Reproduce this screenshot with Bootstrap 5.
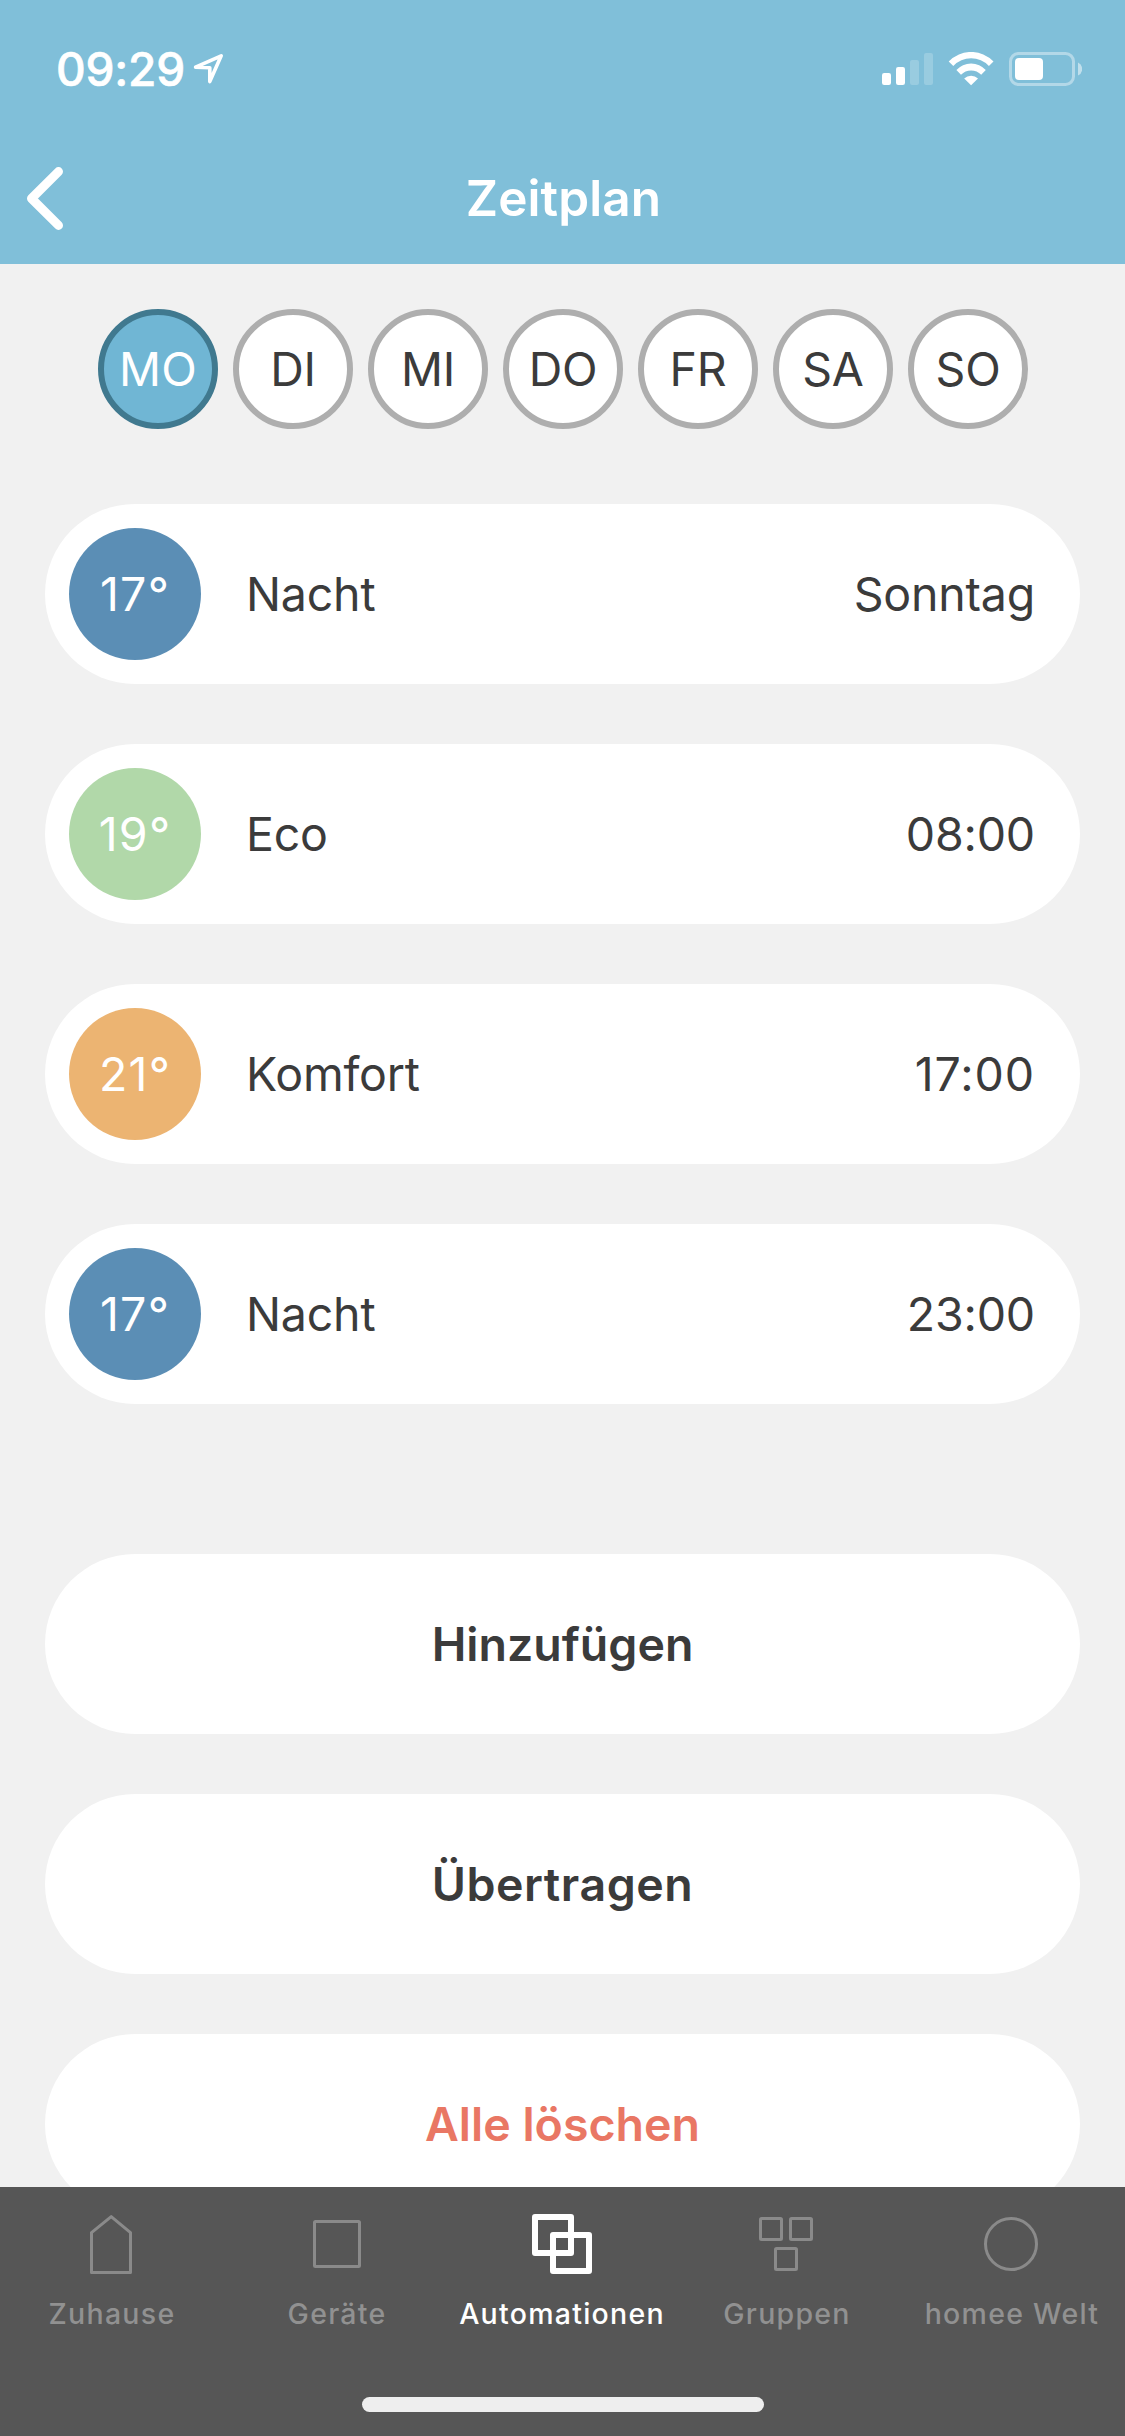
<!DOCTYPE html>
<html lang="de">
<head>
<meta charset="utf-8">
<meta name="viewport" content="width=device-width, initial-scale=1">
<title>Zeitplan</title>
<link href="https://cdn.jsdelivr.net/npm/bootstrap@5.3.0/dist/css/bootstrap.min.css" rel="stylesheet">
<style>
body{font-family:Inter,"Liberation Sans",sans-serif;font-size:46.5px;line-height:1.2;color:#3b3b3b;background:#f1f1f1;letter-spacing:-.2px}
.screen{height:2436px}
.app-head{background:#80bfd9;height:264px}
.status-row{height:132px;padding:6px 43px 0 56px}
.clock{font-size:46px;font-weight:500;letter-spacing:-.2px;padding-top:1px;-webkit-text-stroke:.6px #fff}
.title-row{height:132px}
.title-row h1{font-size:49.5px;font-weight:600;letter-spacing:.12px;padding:2px 0 0 2px}
.back-btn{width:90px;line-height:0}
.content-area{min-height:0}
.days{gap:15px;padding-top:45px;padding-bottom:75px;padding-left:1px}
.day{width:120px;height:120px;padding-top:2px;border:6px solid #aeaeae;background:#fff;letter-spacing:-.3px}
.day.active{background:#70b6d4;border-color:#40798f;color:#fff;letter-spacing:.3px}
.stack{gap:60px;padding:0 45px}
.pill{height:180px;flex:none;background:#fff;border-radius:90px}
.entry{padding:0 45px 0 24px}
.entry-text{padding-top:2px}
.starts-one{letter-spacing:.9px}
.temp{width:132px;height:132px;padding-top:2px;color:#fff;margin-right:45px;letter-spacing:1.25px}
.t-night{background:#5b8eb5}
.t-eco{background:#b1d8a9}
.t-comfort{background:#ecb472}
.actions{margin-top:150px}
.act{font-weight:600;font-size:46.5px;letter-spacing:0;color:#3b3b3b;border:0;padding:1px 0 0}
.act.wide{letter-spacing:.55px}
.danger-text{color:#e97764}
.tabs-bottom{height:249px;background:#565656;z-index:1}
.tab-item{width:225px;padding-top:27px;color:#919191;font-size:28.5px;font-weight:500;letter-spacing:1.26px;white-space:nowrap}
.tab-item svg{color:#8a8a8a;margin-bottom:23px}
.tab-label{margin-right:1px}
.tab-item.active,.tab-item.active svg{color:#fff}
.tabs-row{height:210px}
.home-bar{width:402px;height:15px;background:#eee;margin-right:-1px}
</style>
</head>
<body>
<div class="screen d-flex flex-column overflow-hidden">
  <header class="app-head text-white flex-shrink-0">
    <div class="status-row d-flex justify-content-between align-items-center">
      <div class="d-flex align-items-center">
        <span class="clock">09:29</span>
        <svg class="ms-2" width="32" height="34" viewBox="194 52 32 34" fill="none" stroke="#fff" stroke-width="3.6" stroke-linejoin="round"><path d="M196.6 67.2 222.2 55.8 210.8 81.6V67.7Z"/></svg>
      </div>
      <svg width="202" height="34" viewBox="880 52 202 34" fill="#fff">
        <rect x="882" y="73" width="9" height="12" rx="2.2"/><rect x="896" y="67" width="9" height="18" rx="2.2"/>
        <g opacity=".2"><rect x="910" y="60" width="9" height="25" rx="2.2"/><rect x="924" y="53" width="9" height="32" rx="2.2"/></g>
        <path d="M948.7 61.5A31 31 0 0 1 993.5 61.5L988.9 66A24.5 24.5 0 0 0 953.3 66Z"/>
        <path d="M956.4 70A19.7 19.7 0 0 1 985.8 70L981.2 74.7A14 14 0 0 0 961 74.7Z"/>
        <path d="M964.2 78.6A10 10 0 0 1 978 78.6L971.1 85.3Z"/>
        <rect x="1010.5" y="53.5" width="63" height="31" rx="8" fill="none" stroke="#fff" stroke-width="3" opacity=".4"/>
        <rect x="1015" y="58" width="28" height="22" rx="4"/>
        <path d="M1078 62.6A7 7 0 0 1 1078 75.4Z" opacity=".5"/>
      </svg>
    </div>
    <div class="title-row d-flex align-items-center">
      <a class="back-btn" href="#" aria-label="Zurück"><svg width="66" height="66" viewBox="0 165 66 66" fill="none" stroke="#fff" stroke-width="9" stroke-linecap="round" stroke-linejoin="round"><path d="M58.5 171.6 31.5 198.5 58.5 225.4"/></svg></a>
      <h1 class="flex-fill text-center m-0">Zeitplan</h1>
      <span class="back-btn"></span>
    </div>
  </header>

  <main class="content-area flex-fill overflow-hidden">
    <div class="days d-flex justify-content-center">
      <div class="day active rounded-circle d-flex align-items-center justify-content-center">MO</div>
      <div class="day rounded-circle d-flex align-items-center justify-content-center">DI</div>
      <div class="day rounded-circle d-flex align-items-center justify-content-center">MI</div>
      <div class="day rounded-circle d-flex align-items-center justify-content-center">DO</div>
      <div class="day rounded-circle d-flex align-items-center justify-content-center">FR</div>
      <div class="day rounded-circle d-flex align-items-center justify-content-center">SA</div>
      <div class="day rounded-circle d-flex align-items-center justify-content-center">SO</div>
    </div>
    <div class="stack d-flex flex-column">
      <div class="pill entry d-flex align-items-center"><span class="temp t-night rounded-circle d-flex align-items-center justify-content-center">17°</span><span class="entry-text">Nacht</span><span class="entry-text ms-auto">Sonntag</span></div>
      <div class="pill entry d-flex align-items-center"><span class="temp t-eco rounded-circle d-flex align-items-center justify-content-center">19°</span><span class="entry-text">Eco</span><span class="entry-text ms-auto">08:00</span></div>
      <div class="pill entry d-flex align-items-center"><span class="temp t-comfort rounded-circle d-flex align-items-center justify-content-center">21°</span><span class="entry-text">Komfort</span><span class="entry-text starts-one ms-auto">17:00</span></div>
      <div class="pill entry d-flex align-items-center"><span class="temp t-night rounded-circle d-flex align-items-center justify-content-center">17°</span><span class="entry-text">Nacht</span><span class="entry-text ms-auto">23:00</span></div>
    </div>
    <div class="stack actions d-flex flex-column">
      <button type="button" class="pill act w-100">Hinzufügen</button>
      <button type="button" class="pill act wide w-100">Übertragen</button>
      <button type="button" class="pill act danger-text w-100">Alle löschen</button>
    </div>
  </main>

  <nav class="tabs-bottom flex-shrink-0 d-flex flex-column align-items-center">
    <div class="tabs-row d-flex">
      <div class="tab-item d-flex flex-column align-items-center">
        <svg width="61" height="60" fill="none" stroke="currentColor" stroke-width="3" stroke-linejoin="round"><path d="M9.5 18.6 29.2 2.6 48.5 18.6V58.5H9.5Z"/></svg><span class="tab-label">Zuhause</span></div>
      <div class="tab-item d-flex flex-column align-items-center">
        <svg width="61" height="60" fill="none" stroke="currentColor" stroke-width="3"><rect x="7.5" y="7.5" width="45" height="45" rx="1"/></svg><span class="tab-label">Geräte</span></div>
      <div class="tab-item active d-flex flex-column align-items-center">
        <svg width="61" height="60" fill="none" stroke="currentColor" stroke-width="6" stroke-linejoin="round"><path d="M3 3H39V39H3ZM21 21H57V57H21Z"/></svg><span class="tab-label">Automationen</span></div>
      <div class="tab-item d-flex flex-column align-items-center">
        <svg width="61" height="60" fill="none" stroke="currentColor" stroke-width="3"><rect x="3.5" y="4.5" width="21" height="21" rx="1"/><rect x="33.5" y="4.5" width="21" height="21" rx="1"/><rect x="18.5" y="34.5" width="21" height="21" rx="1"/></svg><span class="tab-label">Gruppen</span></div>
      <div class="tab-item d-flex flex-column align-items-center">
        <svg width="61" height="60" fill="none" stroke="currentColor" stroke-width="3"><circle cx="29" cy="30" r="25.5"/></svg><span class="tab-label">homee Welt</span></div>
    </div>
    <div class="home-bar rounded-pill"></div>
  </nav>
</div>
<script src="https://cdn.jsdelivr.net/npm/bootstrap@5.3.0/dist/js/bootstrap.bundle.min.js"></script>
</body>
</html>
